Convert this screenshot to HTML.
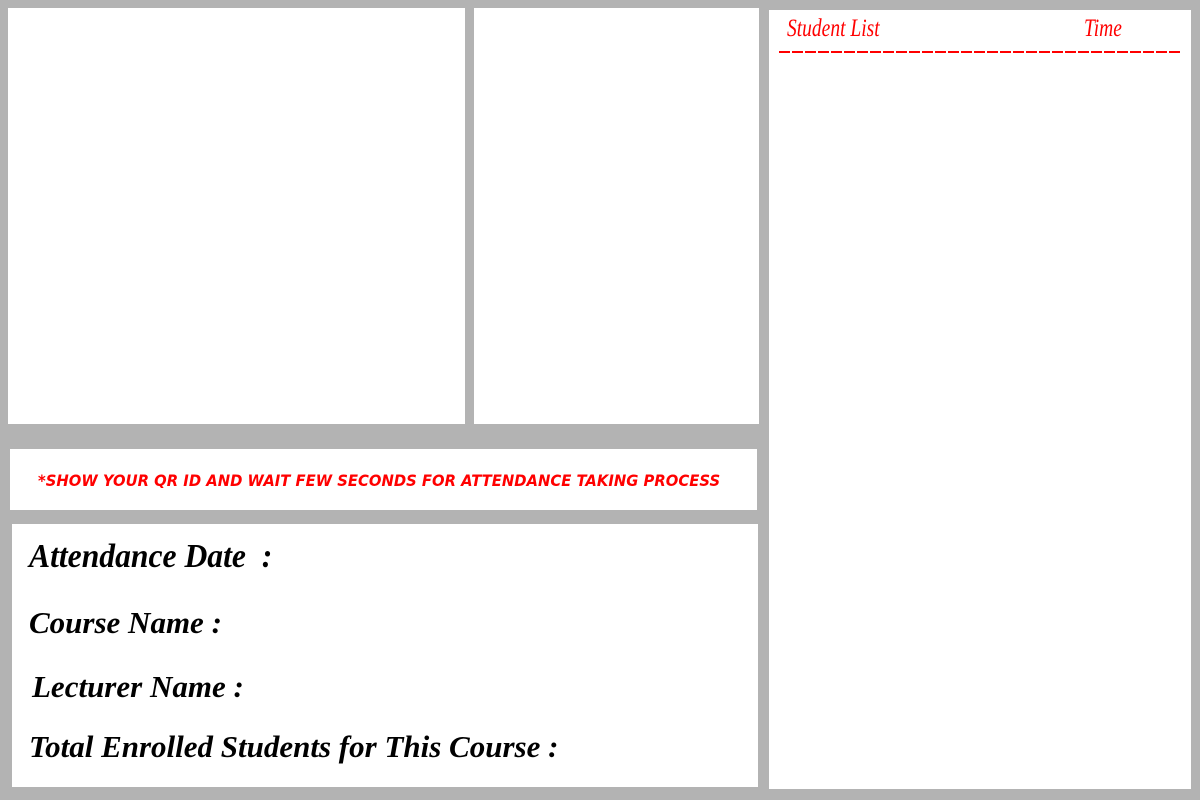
<!DOCTYPE html>
<html><head><style>
body{margin:0;width:1200px;height:800px;background:#b3b3b3;position:relative;overflow:hidden}
.p{position:absolute;background:#fff}
.t{position:absolute;font-family:"Liberation Serif",serif;font-style:italic;font-weight:bold;color:#000;white-space:nowrap}
.r{position:absolute;font-family:"Liberation Serif",serif;font-style:italic;color:#f00;font-size:25px;transform:scaleX(0.78);transform-origin:left top;white-space:nowrap}
</style></head><body>
<div class="p" style="left:8px;top:8px;width:457px;height:416px"></div>
<div class="p" style="left:474px;top:8px;width:285px;height:416px"></div>
<div class="p" style="left:769px;top:10px;width:422px;height:779px"></div>
<div class="p" style="left:10px;top:449px;width:747px;height:61px"></div>
<div class="p" style="left:12px;top:524px;width:746px;height:263px"></div>
<div class="r" style="left:787px;top:15px">Student List</div>
<div class="r" style="left:1084px;top:15px">Time</div>
<div style="position:absolute;left:779px;top:51px;width:401px;height:2px;background:repeating-linear-gradient(90deg,#f00 0 11px,transparent 11px 13px)"></div>
<div style="position:absolute;left:38px;top:471px;font-family:'DejaVu Sans',sans-serif;font-weight:bold;font-style:italic;font-size:16px;color:#f00;white-space:nowrap;transform:scaleX(0.925);transform-origin:left top">*SHOW YOUR QR ID AND WAIT FEW SECONDS FOR ATTENDANCE TAKING PROCESS</div>
<div class="t" style="left:29px;top:538px;font-size:34px;transform:scaleX(0.93);transform-origin:left top">Attendance Date&nbsp; :</div>
<div class="t" style="left:29px;top:605px;font-size:31px">Course Name :</div>
<div class="t" style="left:32px;top:669px;font-size:31px">Lecturer Name :</div>
<div class="t" style="left:29px;top:729px;font-size:31px">Total Enrolled Students for This Course :</div>
</body></html>
